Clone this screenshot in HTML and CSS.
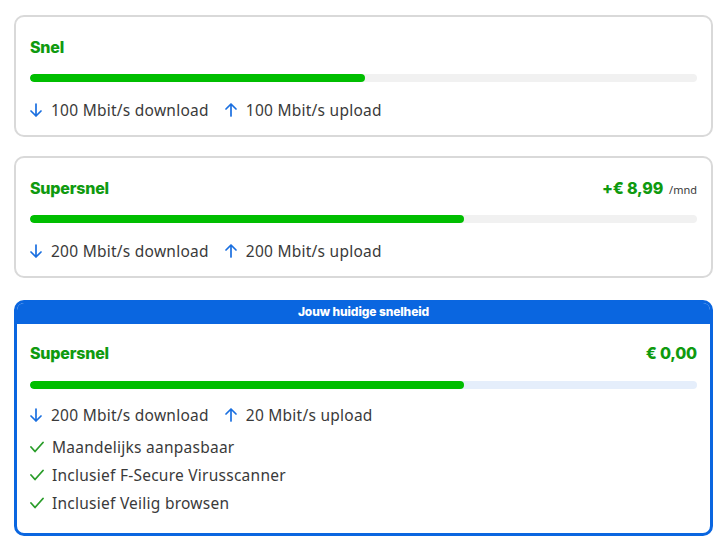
FILE: index.html
```html
<!DOCTYPE html>
<html lang="nl">
<head>
<meta charset="utf-8">
<link rel="stylesheet" href="styles.css">
</head>
<body>
<div class="list">
  <div class="card">
    <div class="head"><span class="title">Snel</span></div>
    <div class="bar"><div class="fill" style="width:50.2%"></div></div>
    <div class="speeds">
      <span class="speed"><svg class="ic" viewBox="0 0 12 14"><path d="M6 1V13M1 8L6 13L11 8"/></svg>100 Mbit/s download</span>
      <span class="speed"><svg class="ic" viewBox="0 0 12 14"><path d="M6 13V1M1 6L6 1L11 6"/></svg>100 Mbit/s upload</span>
    </div>
  </div>
  <div class="card">
    <div class="head"><span class="title">Supersnel</span><span class="price">+€ 8,99<span class="per">/mnd</span></span></div>
    <div class="bar"><div class="fill" style="width:65%"></div></div>
    <div class="speeds">
      <span class="speed"><svg class="ic" viewBox="0 0 12 14"><path d="M6 1V13M1 8L6 13L11 8"/></svg>200 Mbit/s download</span>
      <span class="speed"><svg class="ic" viewBox="0 0 12 14"><path d="M6 13V1M1 6L6 1L11 6"/></svg>200 Mbit/s upload</span>
    </div>
  </div>
  <div class="card current">
    <div class="badge">Jouw huidige snelheid</div>
    <div class="body">
      <div class="head"><span class="title">Supersnel</span><span class="price">€ 0,00</span></div>
      <div class="bar blue"><div class="fill" style="width:65%"></div></div>
      <div class="speeds">
        <span class="speed"><svg class="ic" viewBox="0 0 12 14"><path d="M6 1V13M1 8L6 13L11 8"/></svg>200 Mbit/s download</span>
        <span class="speed"><svg class="ic" viewBox="0 0 12 14"><path d="M6 13V1M1 6L6 1L11 6"/></svg>20 Mbit/s upload</span>
      </div>
      <ul class="checks">
        <li><svg class="ck" viewBox="0 0 14 12"><path d="M1 6L5 10.5L13 1.5"/></svg>Maandelijks aanpasbaar</li>
        <li><svg class="ck" viewBox="0 0 14 12"><path d="M1 6L5 10.5L13 1.5"/></svg>Inclusief F-Secure Virusscanner</li>
        <li><svg class="ck" viewBox="0 0 14 12"><path d="M1 6L5 10.5L13 1.5"/></svg>Inclusief Veilig browsen</li>
      </ul>
    </div>
  </div>
</div>
</body>
</html>
```
FILE: styles.css
```css
html, body {
  margin: 0;
  background: #fff;
}
body {
  padding: 15px 8px 0 14px;
  font-family: "Noto Sans", "Open Sans", sans-serif;
  color: #3a3a3a;
}
.list {
  display: flex;
  flex-direction: column;
}
.card {
  border: 2px solid #d9d9d9;
  border-radius: 10px;
  padding: 0 14px 15px;
  margin-bottom: 19px;
}
.card:nth-child(2) {
  margin-bottom: 22px;
}
.card.current {
  border: 3px solid #0a66e0;
  padding: 0;
  margin-bottom: 0;
  border-radius: 10px;
  overflow: hidden;
}
.badge {
  background: #0a66e0;
  color: #fff;
  font-family: Inter, "Noto Sans", sans-serif;
  font-weight: 800;
  font-size: 12px;
  height: 21px;
  line-height: 18px;
  text-align: center;
  letter-spacing: -0.1px;
}
.body {
  padding: 0 13px 16px;
}
.current .head {
  margin-top: 17px;
}
.head {
  display: flex;
  justify-content: space-between;
  align-items: baseline;
  height: 24px;
  line-height: 24px;
  margin-top: 18px;
}
.title, .price {
  font-family: Inter, "Noto Sans", sans-serif;
  font-weight: 800;
  font-size: 16px;
  color: #0f9a0f;
  letter-spacing: -0.2px;
}
.per {
  font-family: "Noto Sans", sans-serif;
  font-weight: 400;
  font-size: 11px;
  color: #3a3a3a;
  margin-left: 6px;
  letter-spacing: 0;
}
.bar {
  margin-top: 15px;
  height: 8px;
  border-radius: 4px;
  background: #f1f1f1;
  overflow: hidden;
}
.current .bar {
  margin-top: 16px;
}
.bar.blue {
  background: #e5eefb;
}
.fill {
  height: 100%;
  background: #00be00;
  border-radius: 4px;
}
.speeds {
  display: flex;
  gap: 16px;
  margin-top: 18px;
  height: 20px;
  line-height: 20px;
  font-size: 15.5px;
  letter-spacing: 0.25px;
}
.current .speeds {
  margin-top: 16px;
}
.speed {
  display: flex;
  align-items: center;
  gap: 9px;
}
.ic {
  width: 12px;
  height: 14px;
  fill: none;
  stroke: #1a6fe0;
  stroke-width: 1.7;
  stroke-linecap: round;
  stroke-linejoin: round;
}
.checks {
  list-style: none;
  margin: 8px 0 0;
  padding: 0;
  font-size: 15.5px;
  letter-spacing: 0.25px;
}
.checks li {
  display: flex;
  align-items: center;
  gap: 8px;
  height: 28px;
}
.ck {
  width: 14px;
  height: 12px;
  fill: none;
  stroke: #2a9d2a;
  stroke-width: 1.8;
  stroke-linecap: round;
  stroke-linejoin: round;
}
```
